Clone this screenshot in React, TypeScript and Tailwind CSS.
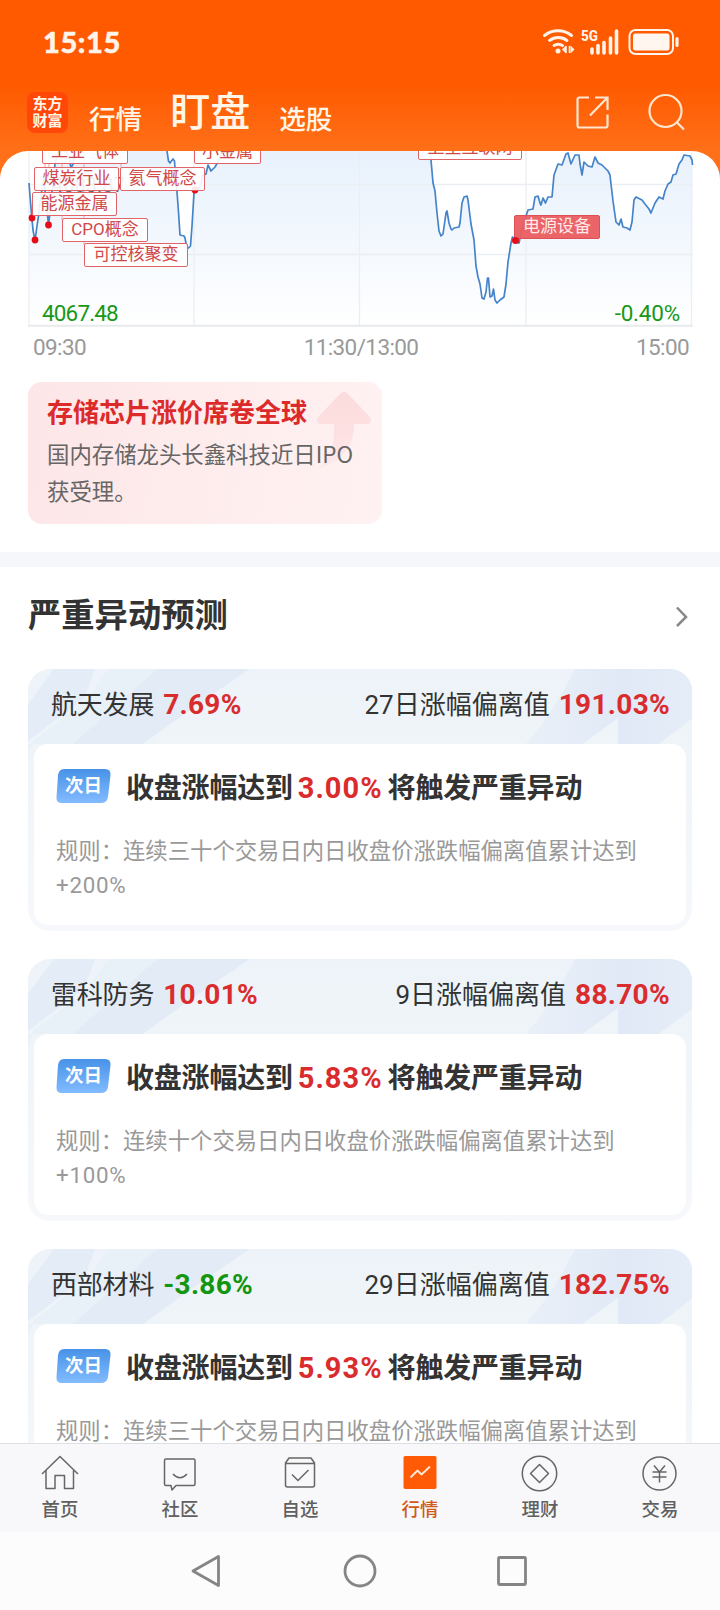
import React from "react";

const LINE_LEFT =
  "M29 183 L30 196 L31.5 214 L33 230 L35 241 L37 226 L38.5 216 L41 195 L44 178 L46 200 L48.5 225 L50 212 L52 190 L55 164 L58 151 L66 151 L69 158 L71 168 L73 164 L75 151 M167 151 L168.5 161 L170 163 L173 159 L174.5 161 L175 169 L176.5 172 L177 192 L178.5 212 L180 235 L184 236 L185 238 L186.5 246 L188.5 248 L190.5 246 L192 226 L194 193 L197 191 L200 187 L203 175 L206 174 L208 165 L211 171 L215 167 L219 160 L222 151";
const LINE_RIGHT =
  "M429 140 L431 160 L433 183 L435 191 L437 213 L439 231 L441 236 L443 234 L446 213 L447 211 L449 223 L451 229 L452 230 L454 228 L459 227 L460 223 L462 203 L464 197 L467 196 L468 200 L471 224 L474 240 L476 266 L478 277 L480 284 L482 298 L484 299 L486 292 L487.500 278 L488.500 278 L490 297 L492 296 L493.500 289 L495 300 L497 303 L500 300 L504 297 L506 284 L508 262 L511 243 L512.500 237 L516 241 L519 243 L521 233 L524 222 L528 210 L533 209 L535 197 L538 196 L540 203 L541 205 L543 198 L545.500 203 L548 197 L552 197 L554 175 L558 164 L562 165 L566 154 L568 153 L571 164 L575 155 L579 155 L580 164 L582 175 L584 162 L588 166 L592 167 L595 157 L598 163 L602 165 L608 171 L610 175 L611 184 L613 201 L616 222 L619 225 L621 219 L623 227 L627 228 L630 230 L632 222 L634 200 L636 197 L642 200 L645 204 L649 209 L651 213 L655 203 L659 197 L663 199 L665 191 L668 184 L671 182 L673 175 L676 174 L679 164 L682 160 L684 155 L690 156 L692 160 L692.500 165";
const AREA =
  "M28.500 151 L29 183 L35 241 L44 178 L48.500 225 L55 164 L58 151 L167 151 L170 163 L175 169 L177 192 L180 235 L184 236 L188.500 248 L191 245 L194 193 L203 175 L208 165 L211 171 L219 160 L222 151 L429 151 " +
  LINE_RIGHT.slice(9) +
  " L692.500 326 L28.500 326 Z";

function Tag({ className, children }: { className: string; children: React.ReactNode }) {
  return (
    <div
      className={
        "absolute flex items-center justify-center whitespace-nowrap rounded-[2px] border pb-[1px] text-[17px] leading-none " +
        className
      }
    >
      {children}
    </div>
  );
}

const outline = "border-[#e06468] bg-white/90 text-[#d04848] h-[24px]";

function StatusBar() {
  return (
    <div className="flex h-[84px] items-center justify-between pl-[43px] pr-[40px]">
      <span className="pb-[2px] font-[Lato,sans-serif] text-[29px] font-black leading-none tracking-[0.6px] text-[#fff3ea] [-webkit-text-stroke:0.5px_#fff3ea]">15:15</span>
      <svg width="138" height="30" viewBox="542 27 138 30" fill="none" stroke="#fff3ea">
        <path d="M544.500 35.500a21.500 21.500 0 0 1 27 0M549.500 40.500a14.500 14.500 0 0 1 17.500 0M554 45.500a8 8 0 0 1 8.500 0" strokeWidth="2.900" strokeLinecap="round" />
        <circle cx="558" cy="51" r="2.500" fill="#fff3ea" stroke="none" />
        <path d="M562 49.500l4-4v8zM574.500 49.500l-4-4v8z" fill="#fff3ea" stroke="none" />
        <path d="M566 46v7M569.500 46v7" strokeWidth="1.500" />
        <path d="M592 49v4M598 45.500v7.500M604 42.500v10.500M610.500 38v15M616.500 31v22" strokeWidth="3.600" strokeLinecap="round" />
        <text x="581" y="41" fill="#fff3ea" stroke="none" fontFamily="Roboto, sans-serif" fontWeight="800" fontSize="15.500" textLength="17" lengthAdjust="spacingAndGlyphs">5G</text>
        <rect x="629.500" y="30" width="43.500" height="24" rx="6" strokeWidth="2" />
        <rect x="633" y="33.500" width="36.500" height="17" rx="2.500" fill="#fff6f0" stroke="none" />
        <path d="M677 38.500v7" strokeWidth="3.200" strokeLinecap="round" />
      </svg>
    </div>
  );
}

function Header() {
  return (
    <header className="h-[179px] shrink-0 bg-[linear-gradient(#ff5a00_0px,#ff5a00_84px,#ff7019_151px)] text-[#fff6e8]">
      <StatusBar />
      <div className="flex h-[67px] pl-[27px] pr-[34px]">
        <div className="mt-[8px] flex size-[41px] flex-col items-center justify-center rounded-[8px] bg-[#ff4808] text-[15px] font-bold leading-[16.5px]">
          <span>东方</span>
          <span>财富</span>
        </div>
        <span className="ml-[21px] mt-[22px] text-[26.6px] font-medium leading-[28px]">行情</span>
        <span className="ml-[28px] mt-[8px] text-[40px] font-medium leading-[42px]">盯盘</span>
        <span className="ml-[29px] mt-[22px] text-[26.6px] font-medium leading-[28px]">选股</span>
        <svg className="ml-auto mt-[8px]" width="112" height="40" viewBox="575 92 112 40" fill="none" stroke="#ffe6cf" strokeWidth="2.200">
          <path d="M590 97.500h-9.500a2 2 0 0 0-2 2V125.500a2 2 0 0 0 2 2H606.500a2 2 0 0 0 2-2V114.500M596 97.500h12.500v12.500M608.500 97.500L591 115.500" />
          <circle cx="666.500" cy="111" r="16" />
          <path d="M678 122.500l7 7" />
        </svg>
      </div>
    </header>
  );
}

function Chart() {
  return (
    <div className="relative h-[219px] shrink-0">
      <svg className="block" width="720" height="177" viewBox="0 151 720 177" fill="none">
        <defs>
          <linearGradient id="area" x1="0" y1="151" x2="0" y2="326" gradientUnits="userSpaceOnUse">
            <stop offset="0" stopColor="#e8f1fc" />
            <stop offset="0.600" stopColor="#f5f9fe" />
            <stop offset="1" stopColor="#ffffff" />
          </linearGradient>
        </defs>
        <path d={AREA} fill="url(#area)" />
        <path d="M28.500 184.500H693M28.500 254.500H693M29 151V326M194 151V326M359.500 151V326M526 151V326M691.500 151V326" stroke="#ebeff3" strokeWidth="1.300" />
        <path d="M28 325.800H693" stroke="#e8eaed" strokeWidth="2" />
        <path d="M45 151V195M49 151V225M62 151V220M84 151V245M121 151V168" stroke="#e8a4aa" strokeWidth="1" />
        <text x="52" y="192" fill="#666" fontFamily="Roboto, sans-serif" fontSize="20">4083.87</text>
        <path d={LINE_LEFT} stroke="#4684ca" strokeWidth="1.700" strokeLinejoin="round" />
        <path d={LINE_RIGHT} stroke="#4684ca" strokeWidth="1.700" strokeLinejoin="round" />
        <g fill="#e60c18">
          <circle cx="32" cy="218" r="3.400" />
          <circle cx="35" cy="240" r="3.400" />
          <circle cx="48.500" cy="225" r="3.400" />
          <circle cx="195" cy="190" r="3.400" />
        </g>
      </svg>
      <Tag className={outline + " left-[42px] top-[-11px] w-[86px]"}>工业气体</Tag>
      <Tag className={outline + " left-[194px] top-[-11px] w-[67px]"}>小金属</Tag>
      <Tag className={outline + " left-[418px] top-[-15px] w-[104px]"}>卫星互联网</Tag>
      <Tag className={outline + " left-[34px] top-[16px] w-[85px]"}>煤炭行业</Tag>
      <Tag className={outline + " left-[120px] top-[16px] w-[85px]"}>氦气概念</Tag>
      <Tag className={outline + " left-[32px] top-[41px] w-[85px]"}>能源金属</Tag>
      <Tag className={outline + " left-[62px] top-[67px] w-[86px]"}>CPO概念</Tag>
      <Tag className={outline + " left-[84px] top-[92px] w-[104px]"}>可控核聚变</Tag>
      <Tag className="left-[514px] top-[64px] h-[24px] w-[86px] border-[#dd5055] bg-[#ea5c60]/95 text-[#ffeaea]">电源设备</Tag>
      <span className="absolute left-[512px] top-[86px] size-[7px] rounded-full bg-[#e60c18]" />
      <span className="absolute left-[42px] top-[149px] text-[22.5px] leading-[26px] tracking-[-0.85px] text-[#189818]">4067.48</span>
      <span className="absolute right-[40px] top-[149px] text-[22.5px] leading-[26px] tracking-[-0.2px] text-[#189818]">-0.40%</span>
      <div className="flex justify-between pl-[33px] pr-[31px] pt-[6px] text-[22.5px] leading-[26px] tracking-[-0.6px] text-[#999]">
        <span>09:30</span>
        <span>11:30/13:00</span>
        <span>15:00</span>
      </div>
    </div>
  );
}

function NewsCard() {
  return (
    <div className="relative ml-[28px] mt-[12px] h-[142px] w-[354px] overflow-hidden rounded-[14px] bg-[linear-gradient(100deg,#fde6e7,#fff2f2)] pl-[19px] pt-[14px]">
      <svg className="absolute left-[286px] top-[8px]" width="60" height="84" viewBox="0 0 60 84">
        <defs>
          <linearGradient id="arrow" x1="0" y1="0" x2="0" y2="1">
            <stop offset="0" stopColor="#fbdcdd" />
            <stop offset="0.500" stopColor="#fde0e1" />
            <stop offset="1" stopColor="#fdebeb" />
          </linearGradient>
        </defs>
        <path d="M27 3q3-3 6 0l23 24q3 5-2 7H40Q41 67 4 79Q22 64 20 34H6q-5-2-2-7z" fill="url(#arrow)" />
      </svg>
      <div className="relative text-[26px] font-bold leading-[34px] text-[#dc2a2b]">存储芯片涨价席卷全球</div>
      <div className="relative mt-[5px] text-[22.4px] leading-[37px] text-[#666]">
        国内存储龙头长鑫科技近日<span className="font-['Noto_Sans_CJK_SC',sans-serif]">IPO</span>
        <br />
        获受理。
      </div>
    </div>
  );
}

interface Stock {
  name: string;
  change: string;
  down?: boolean;
  days: string;
  deviation: string;
  trigger: string;
  rule: string;
  limit: string;
}

const STOCKS: Stock[] = [
  { name: "航天发展", change: "7.69%", days: "27", deviation: "191.03%", trigger: "3.00%", rule: "三十", limit: "+200%" },
  { name: "雷科防务", change: "10.01%", days: "9", deviation: "88.70%", trigger: "5.83%", rule: "十", limit: "+100%" },
  { name: "西部材料", change: "-3.86%", down: true, days: "29", deviation: "182.75%", trigger: "5.93%", rule: "三十", limit: "+200%" },
];

function StockCard({ s }: { s: Stock }) {
  return (
    <div className="relative h-[262px] shrink-0 overflow-hidden rounded-[22px] bg-[linear-gradient(#edf3f8,#f0f5f9_45%,#f6f8fb)] px-[6px]">
      <svg className="absolute left-0 top-0" width="665" height="110" viewBox="0 0 665 110">
        <defs>
          <linearGradient id="sheen" x1="0" y1="0" x2="1" y2="0">
            <stop offset="0" stopColor="#e9f0f8" />
            <stop offset="0.600" stopColor="#e1e9f7" />
            <stop offset="1" stopColor="#e5edf8" />
          </linearGradient>
        </defs>
        <path d="M26 0H67L56 30L0 72V35z" fill="#e4edf7" />
        <path d="M80 0H129L49 75H0V88L5 72L60 30z" fill="#e8f0f8" />
        <path d="M129 0H222Q165 38 115 75H45z" fill="#e3ecf6" />
        <path d="M547 0H665V49L627 78H590V49L550 78H495Q525 45 547 0z" fill="url(#sheen)" />
      </svg>
      <div className="relative flex h-[75px] items-center justify-between pl-[17px] pr-[16px] pb-[4px] text-[26px] leading-none text-[#333]">
        <div className="flex items-center">
          <span className="tracking-[-0.2px]">{s.name}</span>
          <b className={"ml-[9px] text-[28px] tracking-[0.3px] " + (s.down ? "text-[#12950f]" : "text-[#da2c2d]")}>{s.change}</b>
        </div>
        <div className="flex items-center">
          <span>{s.days}日涨幅偏离值</span>
          <b className="ml-[9px] text-[28px] tracking-[0.3px] text-[#da2c2d]">{s.deviation}</b>
        </div>
      </div>
      <div className="relative h-[181px] rounded-[14px] bg-white px-[22px] pt-[24px]">
        <div className="flex h-[36px] items-center">
          <div className="relative flex h-[34px] w-[55px] items-center justify-center">
            <svg className="absolute inset-0" width="55" height="34" viewBox="0 0 55 34">
              <defs>
                <linearGradient id="badge" x1="0" y1="0" x2="0" y2="1">
                  <stop offset="0" stopColor="#4792e7" />
                  <stop offset="1" stopColor="#83bbff" />
                </linearGradient>
              </defs>
              <path d="M8 0H49q6 0 5.500 6L52 28q-1 6-7 6H6q-6 0-5.500-6L2 6q1-6 6-6z" fill="url(#badge)" />
            </svg>
            <span className="relative text-[18.500px] font-bold leading-none text-white">次日</span>
          </div>
          <div className="ml-[15px] flex items-center pt-[5px] text-[28px] font-bold leading-none tracking-[-0.2px] text-[#333]">
            <span>收盘涨幅达到</span>
            <span className="ml-[5px] mr-[5px] text-[29px] tracking-[1px] text-[#da2c2d]">{s.trigger}</span>
            <span>将触发严重异动</span>
          </div>
        </div>
        <div className="mt-[31px] whitespace-nowrap text-[22.35px] leading-[33.500px] text-[#999]">
          规则：连续{s.rule}个交易日内日收盘价涨跌幅偏离值累计达到
          <br />
          <span className="tracking-[0.7px]">{s.limit}</span>
        </div>
      </div>
    </div>
  );
}

const TABS: { label: string; active?: boolean; icon: React.ReactNode }[] = [
  {
    label: "首页",
    icon: <path d="M2 20L20 2.500L38 20M6 16.500V34.500H15V21.500H24.500V34.500H33.500V16.500" />,
  },
  {
    label: "社区",
    icon: <path d="M6 5H33.500q1.500 0 1.500 1.500V30q0 1.500-1.500 1.500H16L12 36l-1-4.500H6q-1.500 0-1.500-1.500V6.500Q4.500 5 6 5zM13 20Q20 27.500 27 20" />,
  },
  {
    label: "自选",
    icon: <path d="M9 4H31L34.500 9V31q0 2-2 2H7.500q-2 0-2-2V9zM5.500 9.500H34.500M12 20.500l6 6L28.500 16" />,
  },
  {
    label: "行情",
    active: true,
    icon: (
      <>
        <rect x="4" y="2.500" width="32" height="32" rx="1" fill="#ff5a05" stroke="#ff5a05" strokeWidth="1" />
        <path d="M10.500 23.500L17.500 16.500L21.500 20.500L30 12.500" stroke="#ffe9d8" strokeWidth="1.800" />
      </>
    ),
  },
  {
    label: "理财",
    icon: (
      <>
        <circle cx="19.500" cy="19.500" r="17.200" />
        <path d="M19.500 10.500L28.500 19.500L19.500 28.500L10.500 19.500z" />
      </>
    ),
  },
  {
    label: "交易",
    icon: (
      <>
        <circle cx="19.500" cy="19.500" r="16.500" />
        <path d="M14 11.500L19.500 18L25 11.500M12.500 18H26.500M12.500 23H26.500M19.500 18V28.500" />
      </>
    ),
  },
];

export default function App() {
  return (
    <div className="flex h-[1610px] w-[720px] flex-col overflow-hidden bg-white font-[Roboto,'Noto_Sans_CJK_SC',sans-serif]">
      <Header />
      <main className="relative -mt-[28px] flex h-[1292px] shrink-0 flex-col overflow-hidden rounded-t-[28px] bg-white">
        <Chart />
        <div className="h-[182px] shrink-0">
          <NewsCard />
        </div>
        <div className="h-[15px] shrink-0 bg-[#f5f7fa]" />
        <div className="flex h-[102px] shrink-0 items-center justify-between pl-[28px] pr-[31px] pb-[4px]">
          <h2 className="text-[33.300px] font-bold leading-none text-[#333]">严重异动预测</h2>
          <svg width="14" height="22" viewBox="0 0 14 22" fill="none" stroke="#888" strokeWidth="2.500">
            <path d="M2 2.500L11 12L2 21" />
          </svg>
        </div>
        <div className="flex shrink-0 flex-col gap-[28px] px-[28px]">
          {STOCKS.map((s) => (
            <StockCard key={s.name} s={s} />
          ))}
        </div>
      </main>
      <nav className="flex h-[89px] shrink-0 border-t border-[#dedfe2] bg-[#f8f8fa]">
        {TABS.map((t) => (
          <div key={t.label} className={"flex flex-1 flex-col items-center pt-[10px] " + (t.active ? "text-[#d0591b]" : "text-[#606060]")}>
            <svg width="40" height="40" viewBox="0 0 40 40" fill="none" stroke="#666" strokeWidth="1.500" strokeLinejoin="round">
              {t.icon}
            </svg>
            <span className="mt-[5px] text-[18.400px] font-medium leading-[22px]">{t.label}</span>
          </div>
        ))}
      </nav>
      <div className="flex grow items-center justify-center bg-[#fcfcfc]">
        <svg width="340" height="40" viewBox="190 1551 340 40" fill="none" stroke="#858585" strokeWidth="2.800" strokeLinejoin="round">
          <path d="M218.500 1556.500V1585.500L193 1571z" />
          <circle cx="360" cy="1571" r="15" />
          <rect x="498.500" y="1557.500" width="27" height="27" rx="1" />
        </svg>
      </div>
    </div>
  );
}
